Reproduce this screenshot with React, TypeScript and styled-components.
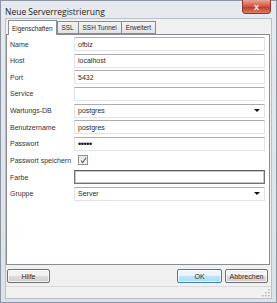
import styled, { createGlobalStyle } from "styled-components";

const GlobalStyle = createGlobalStyle`
  html, body {
    margin: 0;
    padding: 0;
    background: #dfe4ea;
  }
  * {
    box-sizing: border-box;
  }
`;

const Window = styled.div`
  width: 277px;
  height: 303px;
  display: flex;
  flex-direction: column;
  background: linear-gradient(#e6eaef, #dde2e8);
  border: 1px solid #8c96a2;
  font-family: "Liberation Sans", Arial, sans-serif;
  font-size: 7px;
  color: #2a2a2a;
`;

const TitleBar = styled.div`
  height: 17px;
  display: flex;
  align-items: flex-start;
  justify-content: space-between;
  padding-left: 4px;
  padding-right: 5px;
`;

const Title = styled.span`
  padding-top: 5px;
  font-family: "Open Sans", sans-serif;
  font-size: 8.5px;
  color: #1e1e1e;
`;

const CloseButton = styled.div`
  width: 29px;
  height: 14px;
  margin-top: -1px;
  display: flex;
  align-items: center;
  justify-content: center;
  border: 1px solid #8a3a32;
  border-top: none;
  border-radius: 0 0 4px 4px;
  background: linear-gradient(#e8a494, #d0553f 50%, #c13a25 55%, #d9806b);
  color: #fff;
  font-size: 9px;
  font-weight: bold;
`;

const Client = styled.div`
  flex: 1;
  margin: 0 4px 3px 4px;
  display: flex;
  flex-direction: column;
  background: #f0f0f0;
  border: 1px solid #b9c0c9;
`;

const TabStrip = styled.div`
  display: flex;
  align-items: flex-end;
  height: 15px;
  padding-left: 2px;
`;

const Tab = styled.div<{ active?: boolean }>`
  height: ${(p) => (p.active ? "15px" : "13px")};
  padding: 0 ${(p) => (p.active ? "3px" : "4px")};
  display: flex;
  align-items: center;
  font-size: 6.4px;
  background: ${(p) =>
    p.active ? "#fff" : "linear-gradient(#f2f2f2, #e3e3e3)"};
  border: 1px solid #898c95;
  border-bottom: ${(p) => (p.active ? "none" : "1px solid #898c95")};
  margin-right: ${(p) => (p.active ? "0" : "-1px")};
  position: relative;
  z-index: ${(p) => (p.active ? 2 : 1)};
  margin-bottom: ${(p) => (p.active ? "-1px" : "0")};
`;

const Panel = styled.div`
  height: 231px;
  margin: 0 1px 0 0;
  background: #fff;
  border: 1px solid #898c95;
  padding: 2px 3px 0 3px;
  display: grid;
  grid-template-columns: 64px 1fr;
  grid-auto-rows: 14px;
  row-gap: 2.65px;
  align-content: start;
`;

const Label = styled.div`
  display: flex;
  align-items: center;
  white-space: nowrap;
  color: #333;
`;

const Field = styled.div<{ dark?: boolean }>`
  display: flex;
  align-items: center;
  justify-content: space-between;
  padding: 0 3px;
  margin-right: 1px;
  border: 1px solid ${(p) => (p.dark ? "#707070" : "#e2e3ea")};
  border-top-color: ${(p) => (p.dark ? "#5a5a5a" : "#abadb3")};
  box-shadow: ${(p) => (p.dark ? "inset 0 0 0 1px #c8c8c8" : "none")};
  background: #fff;
`;

const Arrow = styled.span`
  width: 0;
  height: 0;
  border-left: 3px solid transparent;
  border-right: 3px solid transparent;
  border-top: 3px solid #111;
  margin-right: 1px;
`;

const Dots = styled.span`
  font-size: 9px;
  letter-spacing: -0.4px;
  color: #111;
`;

const CheckCell = styled.div`
  display: flex;
  align-items: center;
  padding-left: 4px;
`;

const CheckBox = styled.div`
  width: 10px;
  height: 10px;
  border: 1px solid #8f8f8f;
  background: linear-gradient(#e4e4e4, #f7f7f7);
  display: flex;
  align-items: center;
  justify-content: center;
`;

const ButtonBar = styled.div`
  display: flex;
  align-items: center;
  gap: 3px;
  padding: 4px 3px 0 1px;
`;

const Spacer = styled.div`
  flex: 1;
`;

const Button = styled.div<{ primary?: boolean }>`
  width: ${(p) => (p.primary ? "45px" : "43px")};
  height: 14px;
  display: flex;
  align-items: center;
  justify-content: center;
  border: 1px solid ${(p) => (p.primary ? "#3c7fb1" : "#707070")};
  border-radius: 2px;
  background: ${(p) =>
    p.primary
      ? "linear-gradient(#eaf6fd 45%, #bee6fd 50%, #a7d9f5)"
      : "linear-gradient(#f2f2f2 45%, #dddddd 50%, #cfcfcf)"};
  box-shadow: inset 0 0 0 1px rgba(255, 255, 255, 0.7);
`;

const StatusBar = styled.div`
  margin-top: auto;
  height: 12px;
  border-top: 1px solid #dadada;
  display: flex;
  justify-content: flex-end;
  align-items: flex-end;
  padding: 0 1px 1px 0;
`;

const rows: { label: string; value?: string; kind?: string }[] = [
  { label: "Name", value: "ofbiz" },
  { label: "Host", value: "localhost" },
  { label: "Port", value: "5432" },
  { label: "Service", value: "" },
  { label: "Wartungs-DB", value: "postgres", kind: "combo" },
  { label: "Benutzername", value: "postgres" },
  { label: "Passwort", kind: "password" },
  { label: "Passwort speichern", kind: "check" },
  { label: "Farbe", kind: "color" },
  { label: "Gruppe", value: "Server", kind: "combo" },
];

export default function App() {
  return (
    <>
      <GlobalStyle />
      <Window>
        <TitleBar>
          <Title>Neue Serverregistrierung</Title>
          <CloseButton>x</CloseButton>
        </TitleBar>
        <Client>
          <TabStrip>
            <Tab active>Eigenschaften</Tab>
            <Tab>SSL</Tab>
            <Tab>SSH Tunnel</Tab>
            <Tab>Erweitert</Tab>
          </TabStrip>
          <Panel>
            {rows.map((r) => (
              <>
                <Label key={r.label + "l"}>{r.label}</Label>
                {r.kind === "check" ? (
                  <CheckCell key={r.label + "f"}>
                    <CheckBox>
                      <svg width="7" height="7" viewBox="0 0 7 7">
                        <path
                          d="M1 3.6 L2.7 5.6 L6 0.8"
                          stroke="#4a5a78"
                          strokeWidth="1.1"
                          fill="none"
                        />
                      </svg>
                    </CheckBox>
                  </CheckCell>
                ) : (
                  <Field key={r.label + "f"} dark={r.kind === "color"}>
                    {r.kind === "password" ? <Dots>•••••</Dots> : <span>{r.value}</span>}
                    {r.kind === "combo" && <Arrow />}
                  </Field>
                )}
              </>
            ))}
          </Panel>
          <ButtonBar>
            <Button>Hilfe</Button>
            <Spacer />
            <Button primary>OK</Button>
            <Button>Abbrechen</Button>
          </ButtonBar>
          <StatusBar>
            <svg width="8" height="8" viewBox="0 0 8 8">
              {[
                [6, 0],
                [6, 3],
                [3, 3],
                [6, 6],
                [3, 6],
                [0, 6],
              ].map(([x, y], i) => (
                <rect key={i} x={x} y={y} width="1.5" height="1.5" fill="#b5b5b5" />
              ))}
            </svg>
          </StatusBar>
        </Client>
      </Window>
    </>
  );
}
